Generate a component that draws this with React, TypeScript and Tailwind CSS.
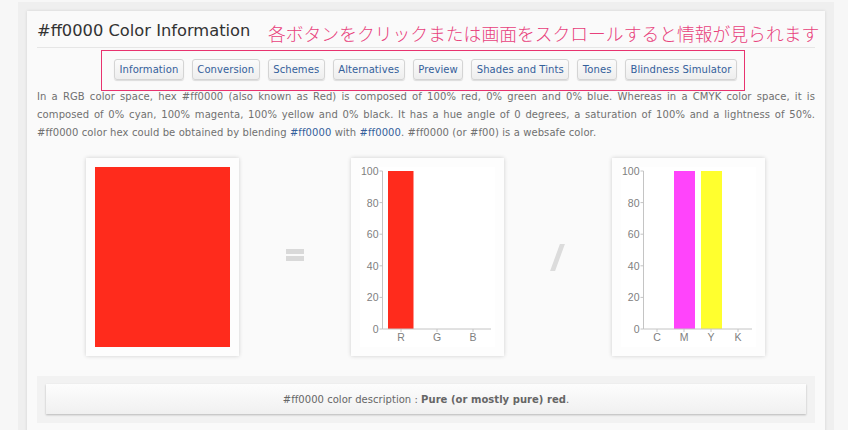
const tabs = ["Information", "Conversion", "Schemes", "Alternatives", "Preview", "Shades and Tints", "Tones", "Blindness Simulator"];

function Chart({ labels, labelX, bars, axisX, axisEnd }: { labels: string[]; labelX: number[]; bars: { x: number; w: number; c: string }[]; axisX: number; axisEnd: number }) {
  const ys = [100, 80, 60, 40, 20, 0];
  return (
    <svg width="135" height="180" viewBox="0 0 135 180" className="block bg-white" style={{ fontFamily: '"Liberation Sans", sans-serif' }}>
      {bars.map((b) => (
        <rect key={b.c} x={b.x} y={4} width={b.w} height={158} fill={b.c} />
      ))}
      <path d={`M${axisX} 4V162H${axisEnd}`} fill="none" stroke="#c4c4c4" strokeWidth="1" />
      {ys.map((v, i) => (
        <g key={v}>
          <line x1={axisX - 3} x2={axisX} y1={4 + i * 31.6} y2={4 + i * 31.6} stroke="#c4c4c4" />
          <text x={axisX - 4} y={8 + i * 31.6} textAnchor="end" fontSize="10.5" fill="#808080">{v}</text>
        </g>
      ))}
      {labels.map((l, i) => (
        <g key={l}>
          <line x1={labelX[i]} x2={labelX[i]} y1={162} y2={165} stroke="#c4c4c4" />
          <text x={labelX[i]} y={174} textAnchor="middle" fontSize="10.5" fill="#808080">{l}</text>
        </g>
      ))}
    </svg>
  );
}

const cardCls = "w-[153px] h-[198px] bg-[#fdfdfd] p-[9px] shadow-[0_0_4px_rgba(0,0,0,0.18)] shrink-0";

export default function App() {
  return (
    <div className="w-[848px] h-[430px] overflow-hidden bg-[#f7f7f7] pl-[18px] pt-[2px] text-[#666666]" style={{ fontFamily: '"DejaVu Sans", Verdana, sans-serif' }}>
      <div className="w-[816px] h-[440px] bg-[#efefef] p-[9px]">
        <div className="relative w-[798px] h-[430px] bg-[#fafafa] px-[10px] shadow-[0_0_3px_rgba(0,0,0,0.12)]">
          <h2 className="h-[37px] pt-[8px] text-[16.3px] leading-[24px] font-normal text-[#333333] border-b border-[#e6e6e6]">#ff0000 Color Information</h2>
          <div className="flex justify-center gap-2 pt-[11px] h-[40px] pr-[1px]">
            {tabs.map((t) => (
              <span key={t} className="h-[21px] px-[4.5px] flex items-center text-[10px] tracking-[0.08px] text-[#34609b] rounded-[3px] border border-[#d4d4d4] bg-gradient-to-b from-[#fbfbfb] to-[#eeeeee] shadow-[0_1px_1px_rgba(0,0,0,0.12)]">{t}</span>
            ))}
          </div>
          <p className="text-[10px] tracking-[0.09px] leading-[18px] text-justify text-[#707070]">
            <span className="block [text-align-last:justify]">In a RGB color space, hex #ff0000 (also known as Red) is composed of 100% red, 0% green and 0% blue. Whereas in a CMYK color space, it is</span>
            <span className="block [text-align-last:justify]">composed of 0% cyan, 100% magenta, 100% yellow and 0% black. It has a hue angle of 0 degrees, a saturation of 100% and a lightness of 50%.</span>
            <span className="block">#ff0000 color hex could be obtained by blending <span className="text-[#34609b]">#ff0000</span> with <span className="text-[#34609b]">#ff0000</span>. #ff0000 (or #f00) is a websafe color.</span>
          </p>
          <div className="flex items-center h-[198px] mt-[16px] pl-[49px]">
            <div className={cardCls}>
              <div className="w-[135px] h-[180px] bg-[#ff2b1c]" />
            </div>
            <div className="ml-[47px] mb-[4px] w-[18px] flex flex-col gap-[2px] shrink-0">
              <div className="h-[5px] bg-[#d9d9d9]" />
              <div className="h-[5px] bg-[#d9d9d9]" />
            </div>
            <div className={`${cardCls} ml-[47px]`}>
              <Chart labels={["R", "G", "B"]} labelX={[41, 77, 113]} axisX={22.5} axisEnd={131} bars={[{ x: 28, w: 25.5, c: "#ff2b1c" }]} />
            </div>
            <div className="ml-[46px] w-[15px] h-[26px] shrink-0 flex justify-center">
              <div className="w-[5px] h-[27px] bg-[#dcdcdc] skew-x-[-20deg]" />
            </div>
            <div className={`${cardCls} ml-[47px]`}>
              <Chart labels={["C", "M", "Y", "K"]} labelX={[36, 63, 90, 117]} axisX={22.5} axisEnd={131} bars={[{ x: 53, w: 21, c: "#ff44fb" }, { x: 80, w: 21, c: "#ffff2e" }]} />
            </div>
          </div>
          <div className="mt-[20px] h-[47px] bg-[#f2f2f2] px-[9px] pt-[8px]">
            <div className="h-[30px] flex items-center justify-center text-[10px] tracking-[0.04px] bg-gradient-to-b from-[#fdfdfd] to-[#f0f0f0] shadow-[0_1px_2px_rgba(0,0,0,0.25)]">
              <span>#ff0000 color description : <b>Pure (or mostly pure) red</b>.</span>
            </div>
          </div>
          <div className="absolute left-[241px] top-[9px] whitespace-nowrap text-[17.8px] leading-[26px] text-[#e8417c] font-light" style={{ fontFamily: '"Noto Sans CJK JP", sans-serif' }}>各ボタンをクリックまたは画面をスクロールすると情報が見られます</div>
          <div className="absolute left-[74px] top-[39px] w-[644px] h-[41px] border border-[#e8336f]" />
        </div>
      </div>
    </div>
  );
}
